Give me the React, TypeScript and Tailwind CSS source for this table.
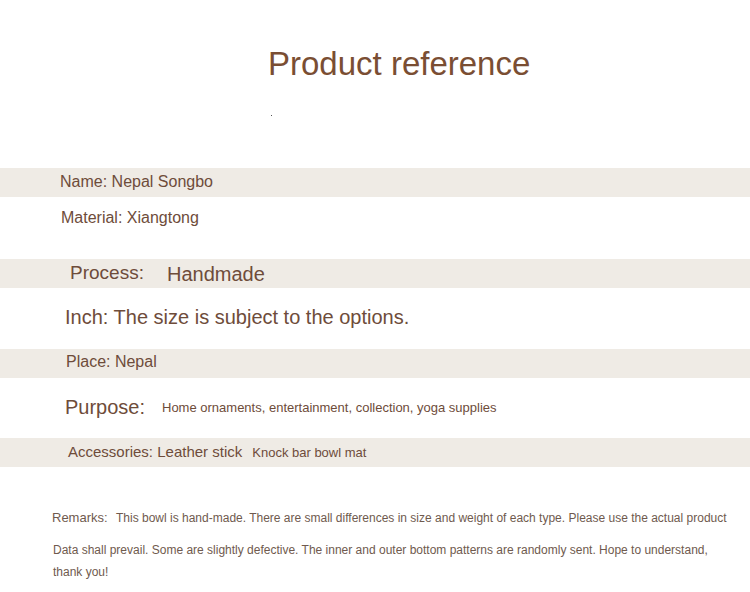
import React from "react";

export default function App() {
  const font = { fontFamily: '"Liberation Sans", Arial, sans-serif' };
  return (
    <div className="w-[750px] h-[592px] bg-white overflow-hidden text-[#6e4c3a]" style={font}>
      <div className="h-[168px] flex flex-col">
        <div className="pt-[47px] pl-[268px] text-[33px] leading-none text-[#7a4e33]">Product reference</div>
        <div className="mt-[35px] ml-[271px] w-[1px] h-[1px] bg-[#555]" />
      </div>
      <div className="h-[29px] bg-[#efebe5] pt-[6px] pl-[60px] text-[16px] leading-none">Name: Nepal Songbo</div>
      <div className="h-[62px] pt-[13px] pl-[61px] text-[16px] leading-none">Material: Xiangtong</div>
      <div className="h-[29px] bg-[#efebe5] pl-[70px] flex items-start">
        <span className="w-[97px] mt-[4px] text-[19px] leading-none">Process:</span>
        <span className="mt-[5px] text-[20px] leading-none">Handmade</span>
      </div>
      <div className="h-[61px] pt-[19px] pl-[65px] text-[20px] leading-none">Inch: The size is subject to the options.</div>
      <div className="h-[29px] bg-[#efebe5] pt-[5px] pl-[66px] text-[16px] leading-none">Place: Nepal</div>
      <div className="h-[60px] pl-[65px] flex items-start">
        <span className="w-[97px] mt-[19px] text-[20px] leading-none">Purpose:</span>
        <span className="mt-[23px] text-[13px] leading-none">Home ornaments, entertainment, collection, yoga supplies</span>
      </div>
      <div className="h-[29px] bg-[#efebe5] pt-[6px] pl-[68px] flex items-baseline gap-[10px]">
        <span className="text-[15px] leading-none">Accessories: Leather stick</span>
        <span className="text-[13px] leading-none">Knock bar bowl mat</span>
      </div>
      <div className="pt-[44px] pl-[52px] text-[12px] text-[#6f5a4e]">
        <div className="flex items-baseline leading-none whitespace-nowrap">
          <span className="w-[64px] text-[13px]">Remarks:</span>
          <span>This bowl is hand-made. There are small differences in size and weight of each type. Please use the actual product</span>
        </div>
        <div className="mt-[15px] pl-[1px] leading-[22px] whitespace-nowrap">
          Data shall prevail. Some are slightly defective. The inner and outer bottom patterns are randomly sent. Hope to understand,
          <br />
          thank you!
        </div>
      </div>
    </div>
  );
}
